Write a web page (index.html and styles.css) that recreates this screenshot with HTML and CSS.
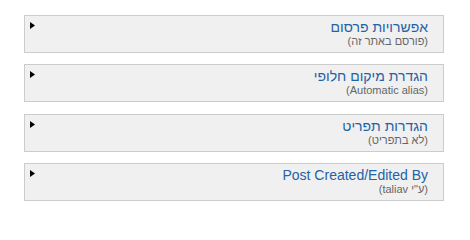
FILE: index.html
```html
<!DOCTYPE html>
<html lang="he" dir="rtl">
<head>
<meta charset="utf-8">
<link rel="stylesheet" href="styles.css">
</head>
<body>
<div class="tabs">
  <div class="tab">
    <div class="text">
      <div class="title">אפשרויות פרסום</div>
      <div class="summary">(פורסם באתר זה)</div>
    </div>
    <svg class="arrow" width="5" height="7" viewBox="0 0 5 7"><polygon points="0,0 5,3.5 0,7" fill="#000"/></svg>
  </div>
  <div class="tab">
    <div class="text">
      <div class="title">הגדרת מיקום חלופי</div>
      <div class="summary">(Automatic alias)</div>
    </div>
    <svg class="arrow" width="5" height="7" viewBox="0 0 5 7"><polygon points="0,0 5,3.5 0,7" fill="#000"/></svg>
  </div>
  <div class="tab">
    <div class="text">
      <div class="title">הגדרות תפריט</div>
      <div class="summary">(לא בתפריט)</div>
    </div>
    <svg class="arrow" width="5" height="7" viewBox="0 0 5 7"><polygon points="0,0 5,3.5 0,7" fill="#000"/></svg>
  </div>
  <div class="tab">
    <div class="text">
      <div class="title" dir="ltr">Post Created/Edited By</div>
      <div class="summary" dir="rtl">(ע"י taliav)&rlm;</div>
    </div>
    <svg class="arrow" width="5" height="7" viewBox="0 0 5 7"><polygon points="0,0 5,3.5 0,7" fill="#000"/></svg>
  </div>
</div>
</body>
</html>
```
FILE: styles.css
```css
html, body {
  background: #fff;
}
body {
  margin: 0;
  padding: 15px 26px 0 26px;
  font-family: Arial, "Liberation Sans", sans-serif;
}
.tabs {
  width: 420px;
  display: flex;
  flex-direction: column;
  gap: 11.33px;
}
.tab {
  box-sizing: border-box;
  height: 38px;
  border: 1px solid #cccccc;
  background: #f0f0f0;
  display: flex;
  justify-content: space-between;
  align-items: flex-start;
  padding: 4px 15px 5px 5px;
}
.text {
  display: flex;
  flex-direction: column;
  align-items: flex-start;
}
.title {
  font-size: 14px;
  line-height: 15px;
  color: #2462a6;
}
.summary {
  font-size: 11px;
  line-height: 12px;
  color: #666666;
}
.arrow {
  display: block;
  margin-top: 2px;
}
```
